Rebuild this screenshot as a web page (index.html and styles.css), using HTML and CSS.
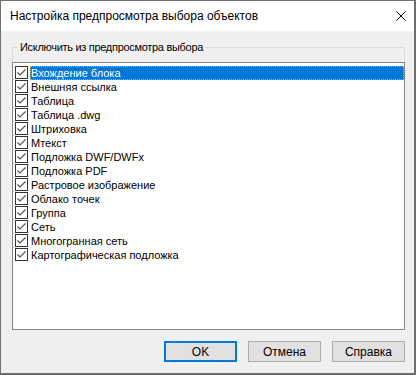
FILE: index.html
```html
<!DOCTYPE html>
<html lang="ru">
<head>
  <meta charset="UTF-8" />
  <title>Настройка предпросмотра выбора объектов</title>
  <link rel="stylesheet" href="styles.css">
</head>
<body>

  <div class="window">
    <div class="titlebar">
      <span class="title">Настройка предпросмотра выбора объектов</span>
      <svg class="close" width="10" height="10" viewBox="0 0 10 10">
        <path d="M0.5 0.5L9.5 9.5M9.5 0.5L0.5 9.5" stroke="#000" stroke-width="1" fill="none" />
      </svg>
    </div>

    <div class="content">
      <fieldset class="group">
        <legend>Исключить из предпросмотра выбора</legend>
        <ul class="list" id="list"></ul>
      </fieldset>

      <div class="buttons">
        <button class="default">OK</button>
        <button>Отмена</button>
        <button>Справка</button>
      </div>
    </div>
  </div>

  <script>
    const items = [
      "Вхождение блока",
      "Внешняя ссылка",
      "Таблица",
      "Таблица .dwg",
      "Штриховка",
      "Мтекст",
      "Подложка DWF/DWFx",
      "Подложка PDF",
      "Растровое изображение",
      "Облако точек",
      "Группа",
      "Сеть",
      "Многогранная сеть",
      "Картографическая подложка"
    ];

    const list = document.getElementById("list");
    items.forEach((text, i) => {
      const li = document.createElement("li");
      li.className = "row" + (i === 0 ? " selected" : "");
      li.innerHTML =
        '<svg class="check" width="13" height="13" viewBox="0 0 13 13">' +
        '<rect x="0.5" y="0.5" width="12" height="12" fill="#fff" stroke="#333" />' +
        '<path d="M2.5 6.5L5 9L10.5 3.5" stroke="#555" stroke-width="1.2" fill="none" />' +
        '</svg><span class="label"></span>';
      li.querySelector(".label").textContent = text;
      list.appendChild(li);
    });
  </script>
</body>
</html>
```

FILE: styles.css
```css
* {
  box-sizing: border-box;
}

body {
  margin: 0;
  background-color: #6b6b6b;
  font-family: "Liberation Sans", Arial, sans-serif;
  font-size: 12px;
  color: #000;
}

.window {
  width: 415px;
  height: 374px;
  border: 1px solid #707070;
  background-color: #f0f0f0;
  display: flex;
  flex-direction: column;
}

.titlebar {
  height: 30px;
  background: #fff;
  display: flex;
  align-items: center;
  justify-content: space-between;
  padding: 0 8px 0 9px;
}

.title {
  font-size: 12px;
}

.close {
  display: block;
}

.content {
  flex: 1;
  padding: 9px 9px 0 11px;
}

.group {
  margin: 0;
  padding: 0;
  border: 1px solid #dcdcdc;
  height: 290px;
}

.group legend {
  margin-left: 5px;
  padding: 0 2px;
  font-size: 11px;
  line-height: 14px;
  letter-spacing: -0.3px;
}

.list {
  list-style: none;
  margin: 8px -1px 0 -1px;
  padding: 3px 0 0 0;
  height: 268px;
  background: #fff;
  border: 1px solid #828790;
  font-size: 11px;
}

.row {
  display: flex;
  align-items: flex-start;
  height: 14px;
  padding-left: 2px;
}

.check {
  flex: none;
  display: block;
}

.label {
  flex: 1;
  margin-left: 2px;
  padding-left: 1px;
  line-height: 14px;
  height: 14px;
  white-space: nowrap;
}

.row.selected .label {
  background: #0078d7;
  color: #fff;
  outline: 1px dotted #f0a030;
  outline-offset: -1px;
}

.buttons {
  display: flex;
  justify-content: flex-end;
  gap: 11px;
  margin-top: 11px;
}

.buttons button {
  width: 73px;
  height: 21px;
  padding: 0;
  background: #e1e1e1;
  border: 1px solid #adadad;
  font-family: "Liberation Sans", Arial, sans-serif;
  font-size: 12px;
  color: #000;
}

.buttons button.default {
  border: 2px solid #0078d7;
}
```
